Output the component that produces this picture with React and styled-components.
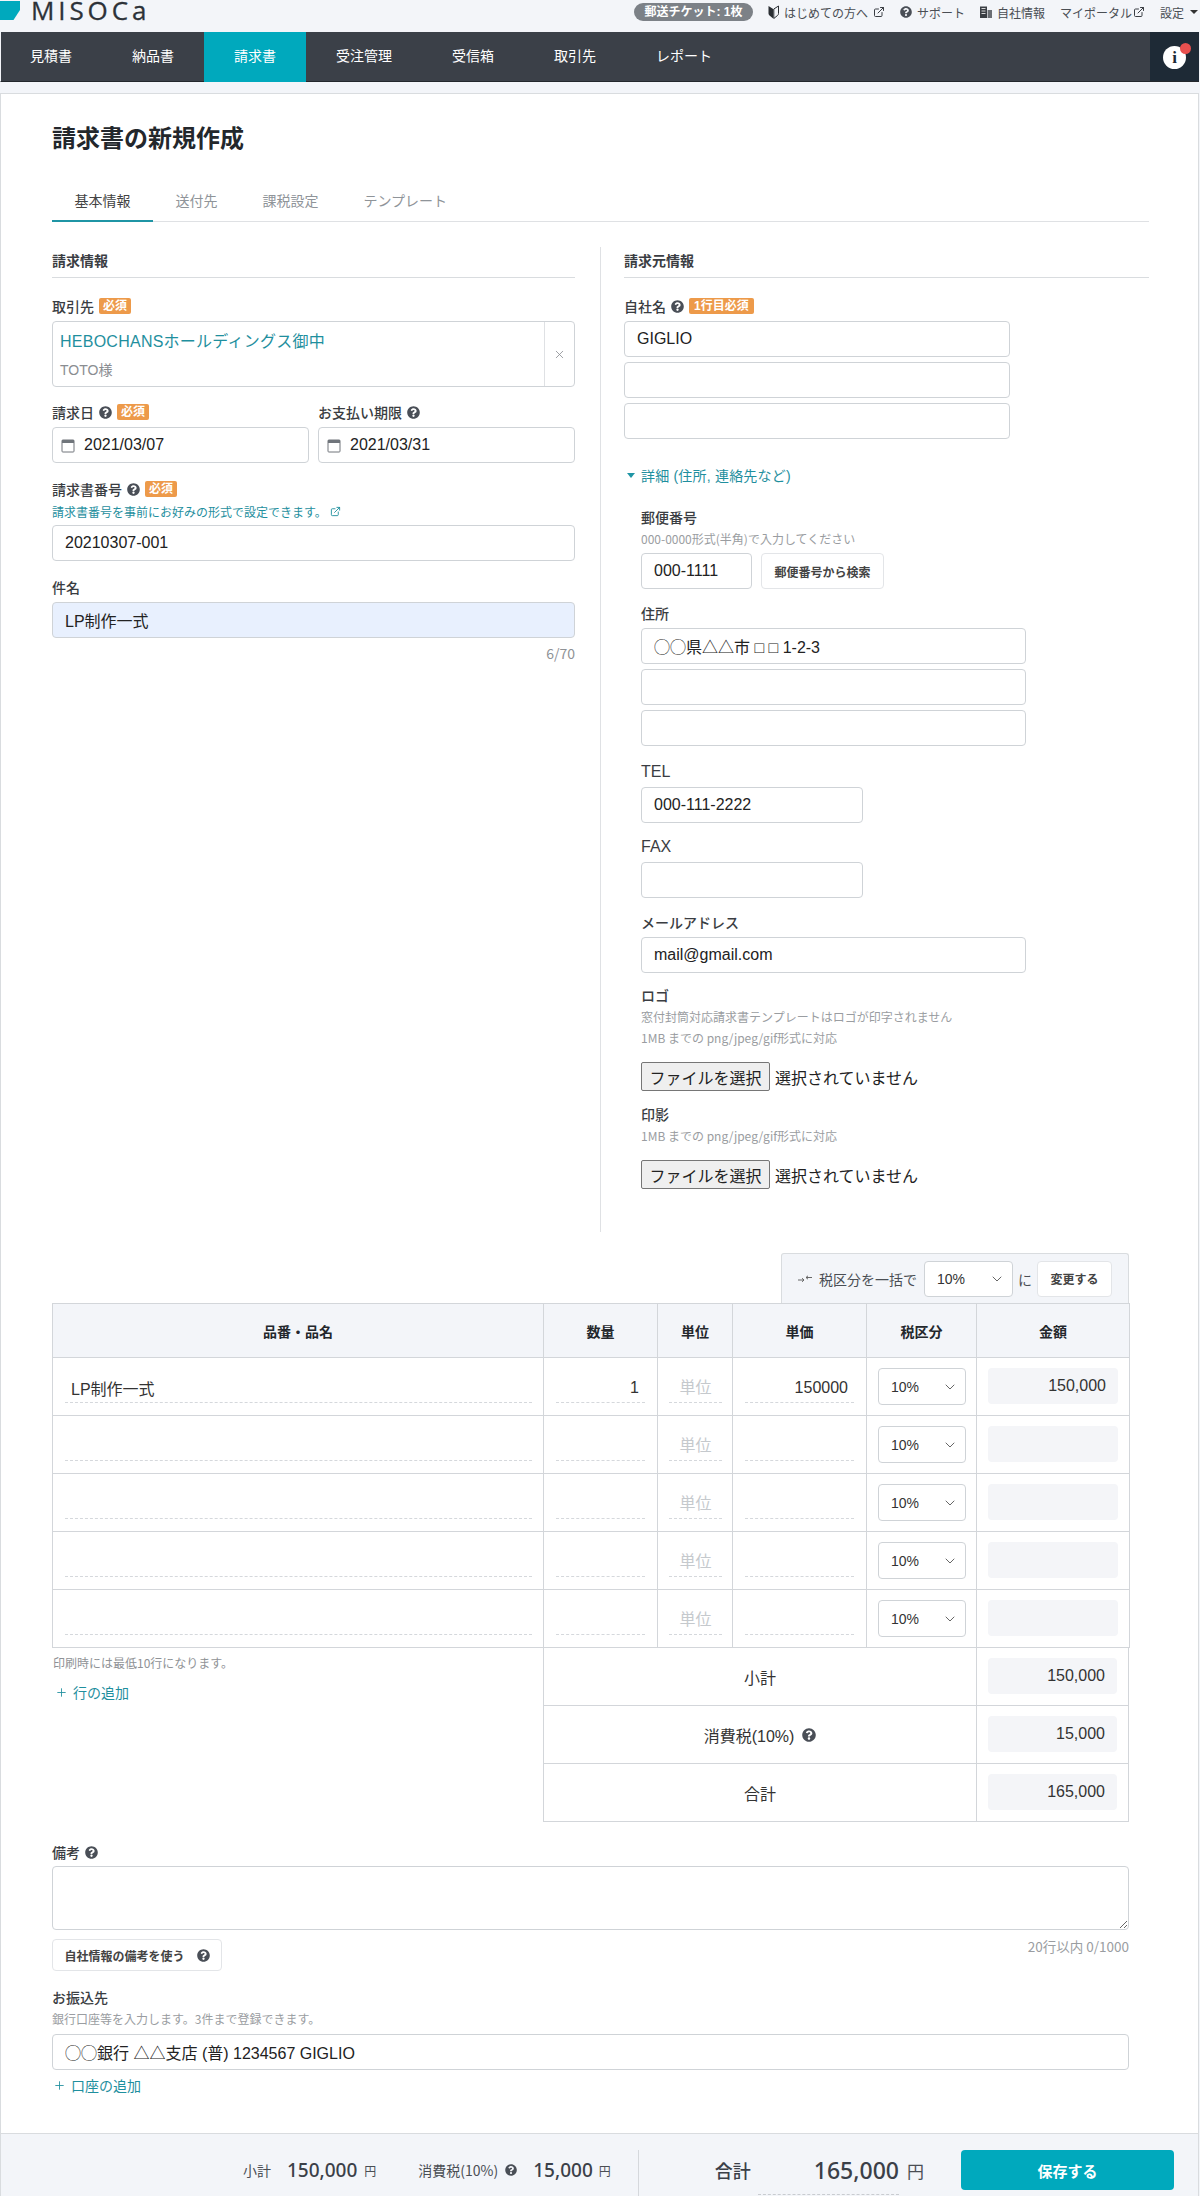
import React from "react";
import styled, { createGlobalStyle } from "styled-components";
import { ChevronDown, ExternalLink, Plus, X } from "lucide-react";
import { FaQuestionCircle } from "react-icons/fa";

const Global = createGlobalStyle`
  html, body { margin: 0; padding: 0; background: #f3f5f9; }
  body { font-family: "Liberation Sans", "Noto Sans CJK JP", sans-serif; color: #333; overflow: hidden; }
  * { box-sizing: border-box; }
`;

const Page = styled.div`width: 1200px; height: 2196px; overflow: hidden;`;

const TopBar = styled.header`display: flex; justify-content: space-between; height: 32px; padding-right: 2px;`;
const Brand = styled.div`display: flex; align-items: flex-start; height: 32px;`;
const BrandMark = styled.svg`width: 21px; height: 22px; flex: none;`;
const BrandName = styled.span`
  font-family: "Open Sans", sans-serif; font-size: 26px; line-height: 20px; margin-left: 10px;
  letter-spacing: 3.9px; color: #2d3238; white-space: nowrap; -webkit-text-stroke: 0.3px #2d3238;
`;
const TopLinks = styled.div`display: flex; align-items: center; gap: 15px; height: 24px; font-size: 12px; color: #444;`;
const Ticket = styled.span`
  display: block; width: 119px; height: 18px; line-height: 18px; border-radius: 9px; background: #7c8187; color: #fff;
  font-weight: 700; text-align: center; white-space: nowrap;
`;
const TopLink = styled.span`display: flex; align-items: center; gap: ${(p) => p.$gap ?? 5}px; white-space: nowrap; color: #4a4e54;`;
const Caret = styled.i`
  display: block; width: 0; height: 0; margin-left: 3px; border-left: 4px solid transparent; border-right: 4px solid transparent;
  border-top: 4px solid #333;
`;

const Nav = styled.nav`
  display: flex; height: 50px; margin-right: 1px; background: #3b4048; border-bottom: 1px solid #23272c; border-left: 1px solid #f3f5f9;
`;
const NavItem = styled.a`
  display: block; height: 50px; padding: 0 30px; margin-left: ${(p) => (p.$first ? "-1px" : "0")}; line-height: 49px; font-size: 14px; color: #fff; white-space: nowrap;
  background: ${(p) => (p.$active ? "#00a9bd" : "transparent")};
`;
const InfoButton = styled.div`
  position: relative; margin-left: auto; width: 49px; height: 49px; background: #1e2a36;
  display: flex; align-items: center; justify-content: center;
`;
const InfoCircle = styled.span`
  display: block; width: 23px; height: 23px; margin-top: 2px; border-radius: 50%; background: #fff; color: #1e2a36; text-align: center;
  font-family: "Liberation Serif", serif; font-weight: 700; font-size: 17px; line-height: 23px;
`;
const RedDot = styled.span`
  position: absolute; top: 11px; right: 8px; width: 11px; height: 11px; border-radius: 50%; background: #e8504f;
`;

const Card = styled.main`
  width: 1199px; margin-top: 11px; background: #fff; border: 1px solid #d9dcdf; border-bottom: 0; height: 2103px;
`;
const Inner = styled.div`padding: 29px 49px 0 51px; height: 2039px;`;
const Title = styled.h1`margin: 0; height: 32px; font-size: 24px; line-height: 32px; font-weight: 700; color: #23272c;`;

const Tabs = styled.div`display: flex; height: 41px; margin-top: 26px; border-bottom: 1px solid #dfe1e4;`;
const Tab = styled.div`
  height: 41px; padding: 0 22.5px; line-height: 40px; font-size: 14px; white-space: nowrap;
  color: ${(p) => (p.$active ? "#444" : "#8f9499")};
  border-bottom: 2px solid ${(p) => (p.$active ? "#1f95a5" : "transparent")};
`;

const Columns = styled.div`display: flex; margin-top: 25px;`;
const LeftCol = styled.section`width: 523px; flex: none; margin-right: 25px;`;
const RightCol = styled.section`flex: 1; padding-left: 23px; padding-bottom: 43px; border-left: 1px solid #dfe1e4;`;
const SectionTitle = styled.h2`
  margin: 0; height: 31px; line-height: 28px; font-size: 14px; font-weight: 700; color: #3a3d42; border-bottom: 1px solid #d9dcdf;
`;

const Label = styled.div`
  display: flex; align-items: center; gap: 5px; height: 20px; margin-top: ${(p) => p.$mt ?? 16}px; margin-bottom: ${(p) => p.$mb ?? 5}px;
  font-size: ${(p) => p.$size ?? 14}px; font-weight: 500; color: #3a3d42; white-space: nowrap;
`;
const Badge = styled.span`
  display: block; height: 16px; padding: 0 ${(p) => p.$px ?? 4}px; border-radius: 2px; background: #ed9a4a; color: #fff; font-size: 12px; line-height: 16px; font-weight: 700;
`;
const Help = styled(FaQuestionCircle)`
  color: #4a4f57; flex: none; font-size: ${(p) => p.$size ?? 13}px; margin-left: ${(p) => p.$ml ?? 0}px;
`;

const ClientBox = styled.div`
  display: flex; height: 66px; border: 1px solid #cfd3d7; border-radius: 4px;
`;
const ClientMain = styled.div`flex: 1; padding: 10px 7px 0; border-right: 1px solid #dfe1e4;`;
const ClientName = styled.div`font-size: 16px; line-height: 20px; letter-spacing: 0.25px; color: #1f8f9e; white-space: nowrap;`;
const ClientSub = styled.div`margin-top: 8px; font-size: 14px; line-height: 20px; color: #8a8d91;`;
const ClientClear = styled.div`width: 29px; display: flex; align-items: center; justify-content: center; color: #8a8d91;`;

const TextInput = styled.input`
  display: block; width: ${(p) => p.$w ?? "100%"}; height: 36px; margin-top: ${(p) => p.$mt ?? 0}px; padding: 0 12px; border: 1px solid #cfd3d7; border-radius: 4px;
  font: inherit; font-size: 16px; color: #222; background: ${(p) => p.$bg ?? "#fff"}; outline: none; flex: none;
`;
const InputStack = styled.div`display: flex; flex-direction: column; gap: 5px;`;
const DateRow = styled.div`display: flex; gap: 9px;`;
const DateCol = styled.div`flex: 1;`;
const DateBox = styled.div`
  display: flex; align-items: center; gap: 9px; height: 36px; padding: 0 8px; border: 1px solid #cfd3d7; border-radius: 4px; font-size: 16px; color: #222;
`;
const LinkHint = styled.div`
  display: flex; align-items: center; gap: 3px; height: 18px; margin-top: -2px; font-size: 12px; color: #1f8f9e; white-space: nowrap;
`;
const Hint = styled.div`
  height: 18px; line-height: 18px; margin-top: ${(p) => p.$mt ?? 3}px; font-family: "Noto Sans CJK JP", sans-serif; font-size: ${(p) => p.$size ?? 12}px; color: #9a9da1; white-space: nowrap;
`;
const Counter = styled.div`height: 16px; line-height: 16px; margin-top: 7px; text-align: right; font-family: "Noto Sans CJK JP", sans-serif; font-size: 14px; color: #8f9296; white-space: nowrap;`;

const Toggle = styled.div`
  display: flex; align-items: center; gap: 6px; height: 20px; margin-top: 26px; margin-left: 3px; font-size: 14px; letter-spacing: 0.2px; color: #1f8f9e; white-space: nowrap;
`;
const ToggleCaret = styled.i`
  display: block; width: 0; height: 0; border-left: 4px solid transparent; border-right: 4px solid transparent; border-top: 5px solid #1f95a5;
`;
const Detail = styled.div`padding-left: 17px;`;
const ZipRow = styled.div`display: flex; gap: 9px; margin-top: 5px;`;
const GhostButton = styled.button`
  display: flex; align-items: center; justify-content: center; gap: 12px; height: ${(p) => p.$h ?? 36}px; width: ${(p) => p.$w}px;
  padding: 0; border: 1px solid #e3e5e8; border-radius: 4px; background: #fff; font: inherit; font-size: 12px; font-weight: 700; color: #444; white-space: nowrap; flex: none;
`;
const FileRow = styled.div`display: flex; align-items: center; gap: 5px; margin-top: 15px; height: 29px; font-size: 16px; color: #222; white-space: nowrap;`;
const FileButton = styled.button`
  width: 129px; height: 29px; padding: 0; border: 1px solid #767676; border-radius: 2px; background: #efefef; font: inherit; font-size: 16px; color: #222; white-space: nowrap;
`;

const Items = styled.div`width: 1077px; margin-top: 21px;`;
const BulkWrap = styled.div`display: flex; justify-content: flex-end;`;
const BulkBar = styled.div`
  display: flex; align-items: center; width: 348px; height: 50px; padding: 0 0 0 16px; background: #f3f5f9; border: 1px solid #d9dcdf; border-bottom: 0;
  border-radius: 3px 3px 0 0; font-size: 14px; color: #4a4e54; white-space: nowrap;
`;
const BulkText = styled.span`margin-left: 7px;`;
const SelectWrap = styled.div`
  position: relative; flex: none; width: ${(p) => p.$w}px; height: ${(p) => p.$h ?? 36}px; margin-left: ${(p) => p.$ml ?? 0}px;
`;
const Select = styled.select`
  display: block; width: 100%; height: 100%; padding: 0 0 0 12px; appearance: none; border: 1px solid #cfd3d7; border-radius: 4px; background: #fff;
  font: inherit; font-size: 14px; color: #333; outline: none;
`;
const SelectChevron = styled(ChevronDown)`position: absolute; top: 50%; right: 8px; margin-top: -8px; color: #666; pointer-events: none;`;
const BulkNi = styled.span`margin: 0 5px;`;

const Table = styled.table`
  width: 1077px; table-layout: fixed; border-collapse: collapse; border: 1px solid #d3d6da;
`;
const Th = styled.th`
  height: 54px; padding: 0; background: #f3f5f9; border: 1px solid #d3d6da; font-size: 14px; font-weight: 700; color: #23272c; text-align: center;
`;
const Td = styled.td`
  height: 58px; padding: ${(p) => p.$pt ?? 15}px ${(p) => p.$pr ?? 11}px 0 ${(p) => p.$pl ?? 11}px; border: 1px solid #d3d6da; vertical-align: top;
`;
const LineInput = styled.input`
  display: block; width: 100%; height: 30px; padding: 0 6px; border: 0; border-bottom: 1px dashed #d5d8dc; outline: none; background: transparent;
  font: inherit; font-size: 16px; color: #333; text-align: ${(p) => p.$align ?? "left"};
  &::placeholder { color: #c5c9cd; opacity: 1; }
`;
const AmountBox = styled.div`
  height: 36px; padding-right: 12px; border-radius: 4px; background: #f4f5f8; text-align: right; font-size: 16px; line-height: 36px; color: #333;
`;

const TotalsRow = styled.div`display: flex;`;
const Notes = styled.div`width: 491px; flex: none; padding-left: 1px;`;
const LineNote = styled.div`
  height: 18px; line-height: 18px; margin-top: 6px; font-family: "Noto Sans CJK JP", sans-serif; font-size: 12px; color: #8f9296;
`;
const AddLink = styled.div`
  display: flex; align-items: center; gap: 5px; height: 20px; margin-top: ${(p) => p.$mt ?? 10}px; margin-left: ${(p) => p.$ml ?? 2}px; font-size: 14px; color: #1f8f9e; white-space: nowrap;
`;
const Totals = styled.div`flex: 1; border-left: 1px solid #d3d6da; border-right: 1px solid #d3d6da;`;
const TotalLine = styled.div`display: flex; height: 58px; border-bottom: 1px solid #d3d6da;`;
const TotalLabel = styled.div`flex: 1; display: flex; align-items: center; justify-content: center; gap: 8px; font-size: 16px; color: #333;`;
const TotalValue = styled.div`width: 152px; flex: none; padding: 10px 11px 0; border-left: 1px solid #d3d6da;`;

const Lower = styled.div`width: 1077px;`;
const Textarea = styled.textarea`
  display: block; width: 100%; height: 64px; border: 1px solid #cfd3d7; border-radius: 4px; outline: none; resize: vertical; background: #fff;
`;
const NoteActions = styled.div`display: flex; justify-content: space-between; align-items: flex-start; margin-top: 9px;`;

const Footer = styled.footer`
  display: flex; align-items: flex-start; justify-content: flex-end; height: 63px; padding: 16px 24px 0 0; background: #f3f5f9; border-top: 1px solid #d9dcdf;
`;
const Summary = styled.div`
  display: flex; align-items: center; height: 47px; padding-right: ${(p) => p.$pr}px; padding-bottom: 7px; color: #4a4e54; white-space: nowrap; font-size: 14px;
  font-family: "Noto Sans CJK JP", sans-serif;
  border-right: ${(p) => (p.$divider ? "1px solid #d5d8dc" : "0")};
`;
const SumGroup = styled.div`display: flex; align-items: center; margin-left: ${(p) => p.$ml ?? 0}px;`;
const SumNum = styled.span`
  font-family: "Noto Sans", sans-serif; font-size: ${(p) => p.$size ?? 19}px; font-weight: 500; color: #3b4048; margin-left: ${(p) => p.$ml ?? 16}px;
`;
const Yen = styled.span`font-size: ${(p) => p.$size ?? 12}px; margin-left: ${(p) => p.$ml ?? 6}px; color: #4a4e54;`;
const GrandLabel = styled.span`font-size: 18px; font-weight: 500; color: #3b4048;`;
const GrandWrap = styled.div`
  position: relative; display: flex; align-items: center; height: 40px; margin-right: 37px; margin-left: 76px;
`;
const DottedLine = styled.span`
  position: absolute; top: 44px; right: 25px; width: 141px; border-top: 1px dashed #c9ccd0;
`;
const SaveButton = styled.button`
  width: 213px; height: 40px; border: 0; border-radius: 4px; background: #00a9bd; color: #fff; font: inherit; font-size: 15px; font-weight: 700;
`;

const Wakaba = () => (
  <svg width="11" height="14" viewBox="0 0 11 14">
    <path d="M0.5 1 L5.2 4 V13.5 L1.5 10.5 Q0.5 9.7 0.5 8.5 Z" fill="#2a2e33" />
    <path d="M10.5 1 L5.8 4 V13.5 L9.5 10.5 Q10.5 9.7 10.5 8.5 Z" fill="none" stroke="#2a2e33" strokeWidth="1" />
  </svg>
);
const Building = () => (
  <svg width="12" height="12" viewBox="0 0 12 12">
    <path d="M0 0.5 H7 V12 H0 Z" fill="#3a3e44" />
    <path d="M7.6 4 H12 V12 H7.6 Z" fill="#6a6e74" />
    <path d="M1.5 2.5 H5.5 M1.5 5 H5.5 M1.5 7.5 H5.5" stroke="#fff" strokeWidth="0.8" />
  </svg>
);
const Calendar = () => (
  <svg width="14" height="15" viewBox="0 0 14 15" fill="none">
    <rect x="1" y="2" width="12" height="12" rx="0.8" stroke="#70757b" strokeWidth="1" />
    <rect x="1" y="2" width="12" height="3" fill="#70757b" />
  </svg>
);
const BulkIcon = () => (
  <svg width="14" height="8" viewBox="0 0 14 8" fill="none" stroke="#666" strokeWidth="1">
    <path d="M0 5 H6 M4 3.2 L6 5 L4 6.8" />
    <path d="M14 2.5 H8 M10 0.8 L8 2.5 L10 4.2" />
  </svg>
);

const TaxSelect = ({ w = 88, h = 37, ml }) => (
  <SelectWrap $w={w} $h={h} $ml={ml}>
    <Select defaultValue="10%">
      <option>10%</option>
      <option>8%</option>
      <option>0%</option>
    </Select>
    <SelectChevron size={16} strokeWidth={1.5} />
  </SelectWrap>
);

const navItems = ["見積書", "納品書", "請求書", "受注管理", "受信箱", "取引先", "レポート"];
const rows = [
  { name: "LP制作一式", qty: "1", price: "150000", amount: "150,000" },
  {},
  {},
  {},
  {},
];

export default function App() {
  return (
    <Page>
      <Global />
      <TopBar>
        <Brand>
          <BrandMark viewBox="0 0 21 22">
            <path d="M0 1 H20 V10 L13.5 20 H0 Z" fill="#00a9bd" />
          </BrandMark>
          <BrandName>MISOCa</BrandName>
        </Brand>
        <TopLinks>
          <Ticket>郵送チケット: 1枚</Ticket>
          <TopLink>
            <Wakaba />
            はじめての方へ
            <ExternalLink size={12} strokeWidth={2} color="#3a3e44" />
          </TopLink>
          <TopLink>
            <Help $size={12} />
            サポート
          </TopLink>
          <TopLink>
            <Building />
            自社情報
          </TopLink>
          <TopLink $gap={1}>
            マイポータル
            <ExternalLink size={12} strokeWidth={2} color="#3a3e44" />
          </TopLink>
          <TopLink $gap={3}>
            設定
            <Caret />
          </TopLink>
        </TopLinks>
      </TopBar>

      <Nav>
        {navItems.map((n, i) => (
          <NavItem key={n} $active={n === "請求書"} $first={i === 0}>{n}</NavItem>
        ))}
        <InfoButton>
          <InfoCircle>i</InfoCircle>
          <RedDot />
        </InfoButton>
      </Nav>

      <Card>
        <Inner>
          <Title>請求書の新規作成</Title>
          <Tabs>
            <Tab $active>基本情報</Tab>
            <Tab>送付先</Tab>
            <Tab>課税設定</Tab>
            <Tab>テンプレート</Tab>
          </Tabs>

          <Columns>
            <LeftCol>
              <SectionTitle>請求情報</SectionTitle>
              <Label $mt={18}>取引先 <Badge>必須</Badge></Label>
              <ClientBox>
                <ClientMain>
                  <ClientName>HEBOCHANSホールディングス御中</ClientName>
                  <ClientSub>TOTO様</ClientSub>
                </ClientMain>
                <ClientClear><X size={13} strokeWidth={1.5} /></ClientClear>
              </ClientBox>

              <DateRow>
                <DateCol>
                  <Label $mt={15}>請求日 <Help /> <Badge>必須</Badge></Label>
                  <DateBox><Calendar />2021/03/07</DateBox>
                </DateCol>
                <DateCol>
                  <Label $mt={15}>お支払い期限 <Help /></Label>
                  <DateBox><Calendar />2021/03/31</DateBox>
                </DateCol>
              </DateRow>

              <Label $mt={16}>請求書番号 <Help /> <Badge>必須</Badge></Label>
              <LinkHint>請求書番号を事前にお好みの形式で設定できます。<ExternalLink size={11} strokeWidth={2} /></LinkHint>
              <TextInput $mt={5} defaultValue="20210307-001" />

              <Label $mt={16}>件名</Label>
              <TextInput $bg="#e8f0fe" defaultValue="LP制作一式" />
              <Counter>6/70</Counter>
            </LeftCol>

            <RightCol>
              <SectionTitle>請求元情報</SectionTitle>
              <Label $mt={18}>自社名 <Help /> <Badge $px={5}>1行目必須</Badge></Label>
              <InputStack>
                <TextInput $w="386px" defaultValue="GIGLIO" />
                <TextInput $w="386px" />
                <TextInput $w="386px" />
              </InputStack>

              <Toggle><ToggleCaret />詳細 (住所, 連絡先など)</Toggle>

              <Detail>
                <Label $mt={22} $mb={0}>郵便番号</Label>
                <Hint>000-0000形式(半角)で入力してください</Hint>
                <ZipRow>
                  <TextInput $w="111px" defaultValue="000-1111" />
                  <GhostButton $w={123}>郵便番号から検索</GhostButton>
                </ZipRow>

                <Label $mt={14}>住所</Label>
                <InputStack>
                  <TextInput $w="385px" defaultValue="◯◯県△△市 □ □ 1-2-3" />
                  <TextInput $w="385px" />
                  <TextInput $w="385px" />
                </InputStack>

                <Label $mt={16} $size={16}>TEL</Label>
                <TextInput $w="222px" defaultValue="000-111-2222" />
                <Label $mt={14} $size={16}>FAX</Label>
                <TextInput $w="222px" />
                <Label $mt={14}>メールアドレス</Label>
                <TextInput $w="385px" defaultValue="mail@gmail.com" />

                <Label $mt={12} $mb={0}>ロゴ</Label>
                <Hint>窓付封筒対応請求書テンプレートはロゴが印字されません</Hint>
                <Hint>1MB までの png/jpeg/gif形式に対応</Hint>
                <FileRow><FileButton>ファイルを選択</FileButton>選択されていません</FileRow>

                <Label $mt={13} $mb={0}>印影</Label>
                <Hint>1MB までの png/jpeg/gif形式に対応</Hint>
                <FileRow><FileButton>ファイルを選択</FileButton>選択されていません</FileRow>
              </Detail>
            </RightCol>
          </Columns>

          <Items>
            <BulkWrap>
              <BulkBar>
                <BulkIcon />
                <BulkText>税区分を一括で</BulkText>
                <TaxSelect w={89} h={36} ml={7} />
                <BulkNi>に</BulkNi>
                <GhostButton $w={75}>変更する</GhostButton>
              </BulkBar>
            </BulkWrap>
            <Table>
              <colgroup>
                <col width="491" />
                <col width="114" />
                <col width="75" />
                <col width="134" />
                <col width="110" />
                <col width="153" />
              </colgroup>
              <thead>
                <tr>
                  <Th>品番・品名</Th>
                  <Th>数量</Th>
                  <Th>単位</Th>
                  <Th>単価</Th>
                  <Th>税区分</Th>
                  <Th>金額</Th>
                </tr>
              </thead>
              <tbody>
                {rows.map((r, i) => (
                  <tr key={i}>
                    <Td $pl={12}><LineInput defaultValue={r.name} /></Td>
                    <Td $pl={12} $pr={12}><LineInput $align="right" defaultValue={r.qty} /></Td>
                    <Td $pr={10}><LineInput $align="center" placeholder="単位" /></Td>
                    <Td $pl={12} $pr={12}><LineInput $align="right" defaultValue={r.price} /></Td>
                    <Td $pt={10}><TaxSelect /></Td>
                    <Td $pt={10}><AmountBox>{r.amount}</AmountBox></Td>
                  </tr>
                ))}
              </tbody>
            </Table>
            <TotalsRow>
              <Notes>
                <LineNote>印刷時には最低10行になります。</LineNote>
                <AddLink><Plus size={13} strokeWidth={1.6} />行の追加</AddLink>
              </Notes>
              <Totals>
                <TotalLine>
                  <TotalLabel>小計</TotalLabel>
                  <TotalValue><AmountBox>150,000</AmountBox></TotalValue>
                </TotalLine>
                <TotalLine>
                  <TotalLabel>消費税(10%) <Help $size={14} /></TotalLabel>
                  <TotalValue><AmountBox>15,000</AmountBox></TotalValue>
                </TotalLine>
                <TotalLine>
                  <TotalLabel>合計</TotalLabel>
                  <TotalValue><AmountBox>165,000</AmountBox></TotalValue>
                </TotalLine>
              </Totals>
            </TotalsRow>
          </Items>

          <Lower>
            <Label $mt={20} $mb={4}>備考 <Help /></Label>
            <Textarea />
            <NoteActions>
              <GhostButton $w={170} $h={32}>自社情報の備考を使う <Help /></GhostButton>
              <Hint $mt={-2} $size={13.5}>20行以内 0/1000</Hint>
            </NoteActions>
            <Label $mt={16} $mb={0}>お振込先</Label>
            <Hint>銀行口座等を入力します。3件まで登録できます。</Hint>
            <TextInput $mt={6} defaultValue="◯◯銀行 △△支店 (普) 1234567 GIGLIO" />
            <AddLink $mt={5} $ml={1}><Plus size={13} strokeWidth={1.6} />口座の追加</AddLink>
          </Lower>
        </Inner>

        <Footer>
          <Summary $pr={27} $divider>
            <SumGroup>小計<SumNum>150,000</SumNum><Yen $ml={7}>円</Yen></SumGroup>
            <SumGroup $ml={42}>消費税(10%)<Help $size={12} $ml={7} /><SumNum>15,000</SumNum><Yen>円</Yen></SumGroup>
          </Summary>
          <GrandWrap>
            <GrandLabel>合計</GrandLabel>
            <SumNum $size={23} $ml={63}>165,000</SumNum>
            <Yen $size={17} $ml={8}>円</Yen>
            <DottedLine />
          </GrandWrap>
          <SaveButton>保存する</SaveButton>
        </Footer>
      </Card>
    </Page>
  );
}
